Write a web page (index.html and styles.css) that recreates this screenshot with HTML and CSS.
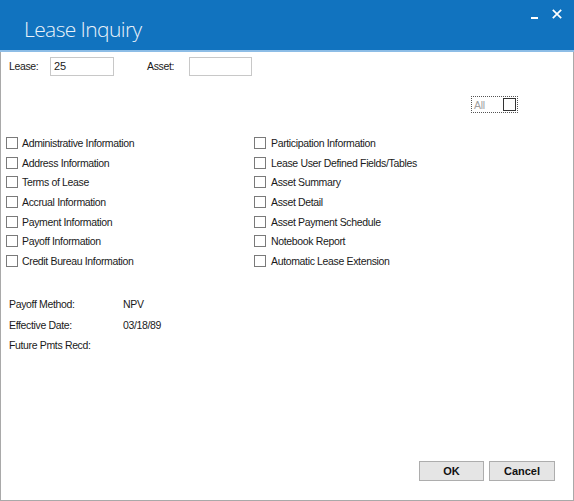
FILE: index.html
```html
<!DOCTYPE html>
<html>
<head>
<meta charset="utf-8">
<link rel="stylesheet" href="styles.css">
</head>
<body>
<div class="window">
  <div class="titlebar">
    <div class="title">Lease Inquiry</div>
    <div class="controls">
      <svg class="ctl" width="9" height="10" viewBox="0 0 9 10"><rect x="0" y="8" width="7" height="2" fill="#fff"/></svg>
      <svg class="ctl" width="10" height="10" viewBox="0 0 10 10"><path d="M0.8 0.8 L9.2 9.2 M9.2 0.8 L0.8 9.2" stroke="#fff" stroke-width="1.7"/></svg>
    </div>
  </div>
  <div class="content">
    <div class="fields">
      <label class="lbl lease-lbl">Lease:</label>
      <div class="input lease-in">25</div>
      <label class="lbl asset-lbl">Asset:</label>
      <div class="input asset-in"></div>
    </div>
    <div class="allrow">
      <div class="allbox"><span class="alltxt">All</span><span class="allchk"></span></div>
    </div>
    <div class="checks">
      <div class="col">
        <div class="chk"><span class="box"></span>Administrative Information</div>
        <div class="chk"><span class="box"></span>Address Information</div>
        <div class="chk"><span class="box"></span>Terms of Lease</div>
        <div class="chk"><span class="box"></span>Accrual Information</div>
        <div class="chk"><span class="box"></span>Payment Information</div>
        <div class="chk"><span class="box"></span>Payoff Information</div>
        <div class="chk"><span class="box"></span>Credit Bureau Information</div>
      </div>
      <div class="col">
        <div class="chk"><span class="box"></span>Participation Information</div>
        <div class="chk"><span class="box"></span>Lease User Defined Fields/Tables</div>
        <div class="chk"><span class="box"></span>Asset Summary</div>
        <div class="chk"><span class="box"></span>Asset Detail</div>
        <div class="chk"><span class="box"></span>Asset Payment Schedule</div>
        <div class="chk"><span class="box"></span>Notebook Report</div>
        <div class="chk"><span class="box"></span>Automatic Lease Extension</div>
      </div>
    </div>
    <div class="info">
      <div class="irow"><span class="ik">Payoff Method:</span><span class="iv">NPV</span></div>
      <div class="irow"><span class="ik">Effective Date:</span><span class="iv">03/18/89</span></div>
      <div class="irow"><span class="ik">Future Pmts Recd:</span><span class="iv"></span></div>
    </div>
    <div class="buttons">
      <button class="btn ok">OK</button>
      <button class="btn cancel">Cancel</button>
    </div>
  </div>
</div>
</body>
</html>
```
FILE: styles.css
```css
html, body {
  margin: 0;
  padding: 0;
  background: #fff;
}
.window {
  width: 574px;
  height: 501px;
  box-sizing: border-box;
  border-left: 1px solid #a9a9a9;
  border-right: 1px solid #a9a9a9;
  border-bottom: 1px solid #a9a9a9;
  display: flex;
  flex-direction: column;
  font-family: "Liberation Sans", Arial, sans-serif;
  font-size: 10.5px;
  letter-spacing: -0.35px;
  color: #1a1a1a;
}
.titlebar {
  height: 50px;
  background: #1173bf;
  border-bottom: 2px solid #8dbde6;
  margin: 0 -1px;
  display: flex;
  justify-content: space-between;
  align-items: flex-start;
}
.title {
  font-family: "Open Sans", sans-serif;
  font-weight: 300;
  font-size: 21px;
  color: #eaf2fa;
  padding: 15px 0 0 24px;
  letter-spacing: -0.6px;
}
.controls {
  display: flex;
  align-items: flex-start;
  gap: 12px;
  padding: 9px 12px 0 0;
}
.content {
  flex: 1;
  display: flex;
  flex-direction: column;
  position: relative;
}
.fields {
  display: flex;
  align-items: center;
  height: 19px;
  margin-top: 5px;
  padding-left: 8px;
}
.lbl { line-height: 19px; }
.lease-lbl { width: 41px; }
.asset-lbl { width: 42px; margin-left: 33px; }
.input {
  box-sizing: border-box;
  height: 19px;
  border: 1px solid #c8c8c8;
  background: #fff;
  padding: 2px 3px;
  line-height: 13px;
  font-size: 11px;
  letter-spacing: 0;
}
.lease-in { width: 64px; }
.asset-in { width: 63px; }
.allrow {
  display: flex;
  justify-content: flex-end;
  margin-top: 20px;
  padding-right: 55px;
}
.allbox {
  box-sizing: border-box;
  width: 47px;
  height: 17px;
  border: 1px dotted #555;
  display: flex;
  align-items: center;
  justify-content: space-between;
  padding: 0 1px 0 2px;
}
.alltxt { color: #a0a0a0; }
.allchk {
  width: 11px;
  height: 11px;
  border: 1px solid #333;
}
.checks {
  display: flex;
  margin-top: 20px;
  padding-left: 5px;
}
.col {
  display: flex;
  flex-direction: column;
}
.col:first-child { width: 248px; }
.chk {
  height: 19.7px;
  display: flex;
  align-items: center;
}
.box {
  box-sizing: border-box;
  width: 12px;
  height: 12px;
  border: 1px solid #7a7a7a;
  background: #fff;
  margin-right: 4px;
}
.col:last-child .box { margin-right: 5px; }
.info {
  display: flex;
  flex-direction: column;
  margin-top: 23px;
  padding-left: 8px;
}
.irow {
  height: 20.5px;
  display: flex;
  align-items: center;
}
.ik { width: 114px; }
.buttons {
  position: absolute;
  right: 18px;
  bottom: 19px;
  display: flex;
  gap: 5px;
}
.btn {
  box-sizing: border-box;
  height: 20px;
  width: 65px;
  border: 1px solid #adadad;
  background: #e5e5e5;
  font-family: "Liberation Sans", Arial, sans-serif;
  font-weight: bold;
  font-size: 11px;
  color: #111;
  padding: 0;
}
.cancel { width: 66px; }
```
